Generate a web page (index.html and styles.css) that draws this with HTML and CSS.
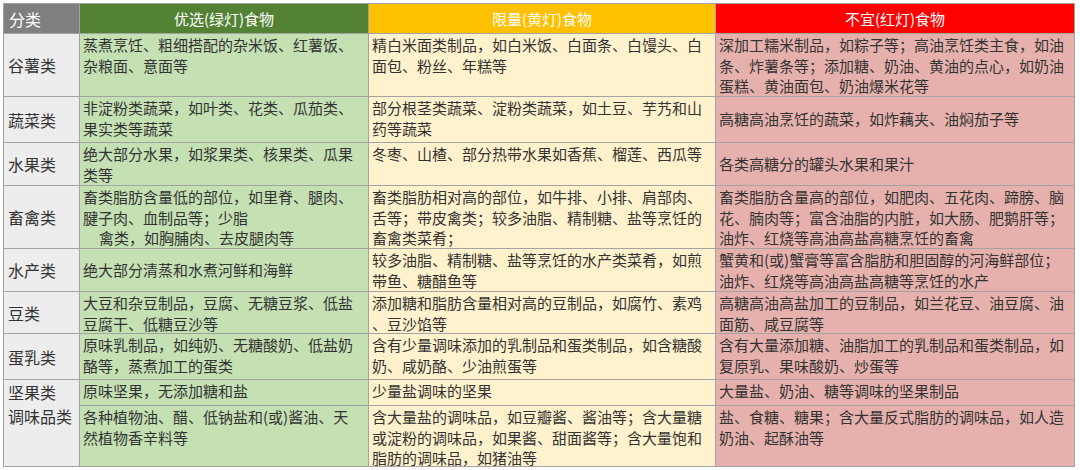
FILE: index.html
```html
<!DOCTYPE html>
<html lang="zh-CN">
<head>
<meta charset="utf-8">
<title>食物红绿灯</title>
<link rel="stylesheet" href="styles.css">
</head>
<body>
<div class="sheet">
  <div class="hd hd-cat">分类</div>
  <div class="hd hd-green">优选(绿灯)食物</div>
  <div class="hd hd-yellow">限量(黄灯)食物</div>
  <div class="hd hd-red">不宜(红灯)食物</div>

  <div class="cat mid">谷薯类</div>
  <div class="c g">蒸煮烹饪、粗细搭配的杂米饭、红薯饭、<br>杂粮面、意面等</div>
  <div class="c y">精白米面类制品，如白米饭、白面条、白馒头、白<br>面包、粉丝、年糕等</div>
  <div class="c r">深加工糯米制品，如粽子等；高油烹饪类主食，如油<br>条、炸薯条等；添加糖、奶油、黄油的点心，如奶油<br>蛋糕、黄油面包、奶油爆米花等</div>

  <div class="cat mid">蔬菜类</div>
  <div class="c g">非淀粉类蔬菜，如叶类、花类、瓜茄类、<br>果实类等蔬菜</div>
  <div class="c y">部分根茎类蔬菜、淀粉类蔬菜，如土豆、芋艿和山<br>药等蔬菜</div>
  <div class="c r mid">高糖高油烹饪的蔬菜，如炸藕夹、油焖茄子等</div>

  <div class="cat mid">水果类</div>
  <div class="c g">绝大部分水果，如浆果类、核果类、瓜果<br>类等</div>
  <div class="c y">冬枣、山楂、部分热带水果如香蕉、榴莲、西瓜等</div>
  <div class="c r mid">各类高糖分的罐头水果和果汁</div>

  <div class="cat mid">畜禽类</div>
  <div class="c g">畜类脂肪含量低的部位，如里脊、腿肉、<br>腱子肉、血制品等；少脂<br><span class="indent">禽类，如胸脯肉、去皮腿肉等</span></div>
  <div class="c y">畜类脂肪相对高的部位，如牛排、小排、肩部肉、<br>舌等；带皮禽类；较多油脂、精制糖、盐等烹饪的<br>畜禽类菜肴；</div>
  <div class="c r">畜类脂肪含量高的部位，如肥肉、五花肉、蹄膀、脑<br>花、腩肉等；富含油脂的内脏，如大肠、肥鹅肝等；<br>油炸、红烧等高油高盐高糖烹饪的畜禽</div>

  <div class="cat mid">水产类</div>
  <div class="c g mid">绝大部分清蒸和水煮河鲜和海鲜</div>
  <div class="c y">较多油脂、精制糖、盐等烹饪的水产类菜肴，如煎<br>带鱼、糖醋鱼等</div>
  <div class="c r">蟹黄和(或)蟹膏等富含脂肪和胆固醇的河海鲜部位；<br>油炸、红烧等高油高盐高糖等烹饪的水产</div>

  <div class="cat mid">豆类</div>
  <div class="c g">大豆和杂豆制品，豆腐、无糖豆浆、低盐<br>豆腐干、低糖豆沙等</div>
  <div class="c y">添加糖和脂肪含量相对高的豆制品，如腐竹、素鸡<br>、豆沙馅等</div>
  <div class="c r">高糖高油高盐加工的豆制品，如兰花豆、油豆腐、油<br>面筋、咸豆腐等</div>

  <div class="cat mid">蛋乳类</div>
  <div class="c g">原味乳制品，如纯奶、无糖酸奶、低盐奶<br>酪等，蒸煮加工的蛋类</div>
  <div class="c y">含有少量调味添加的乳制品和蛋类制品，如含糖酸<br>奶、咸奶酪、少油煎蛋等</div>
  <div class="c r">含有大量添加糖、油脂加工的乳制品和蛋类制品，如<br>复原乳、果味酸奶、炒蛋等</div>

  <div class="cat cat-merge">坚果类<br>调味品类</div>
  <div class="c g">原味坚果，无添加糖和盐</div>
  <div class="c y">少量盐调味的坚果</div>
  <div class="c r">大量盐、奶油、糖等调味的坚果制品</div>

  <div class="c g">各种植物油、醋、低钠盐和(或)酱油、天<br>然植物香辛料等</div>
  <div class="c y">含大量盐的调味品，如豆瓣酱、酱油等；含大量糖<br>或淀粉的调味品，如果酱、甜面酱等；含大量饱和<br>脂肪的调味品，如猪油等</div>
  <div class="c r">盐、食糖、糖果；含大量反式脂肪的调味品，如人造<br>奶油、起酥油等</div>
</div>
</body>
</html>
```

FILE: styles.css
```css
html, body {
  margin: 0;
  padding: 0;
  background: #ffffff;
}

body {
  padding: 3px 0 0 3px;
  font-family: "Noto Sans CJK SC", "Noto Sans", sans-serif;
  color: #333333;
}

.sheet {
  display: grid;
  grid-template-columns: 75px 288px 346px 358px;
  grid-template-rows: 29px 62px 45px 42px 62px 42px 41px 45px 25px 60px;
  gap: 1px;
  padding: 1px;
  background: #a3a3a3;
  width: max-content;
}

.hd {
  display: flex;
  align-items: center;
  justify-content: center;
  color: #ffffff;
  font-size: 15px;
  line-height: 20px;
}

.hd-cat {
  background: #7f7f7f;
  justify-content: flex-start;
  padding-left: 5px;
  font-size: 16px;
}

.hd-green { background: #548235; }
.hd-yellow { background: #ffc000; }
.hd-red { background: #ff0000; }

.cat {
  background: #ededed;
  font-size: 16px;
  line-height: 24px;
  padding-left: 4px;
  display: flex;
  flex-direction: column;
  justify-content: flex-start;
}

.cat-merge {
  grid-row: span 2;
  padding-top: 0;
}

.c {
  font-size: 15px;
  line-height: 20.5px;
  padding: 1px 0 0 3px;
  white-space: nowrap;
  display: flex;
  flex-direction: column;
  justify-content: flex-start;
  display: block;
}

.c.mid, .cat.mid {
  display: flex;
  flex-direction: column;
  justify-content: center;
  padding-top: 0;
}

.c.mid {
  display: flex;
}

.g { background: #c5e0b3; }
.y { background: #fff2cc; }
.r { background: #e6b1ad; }

.indent {
  padding-left: 16px;
}
```
